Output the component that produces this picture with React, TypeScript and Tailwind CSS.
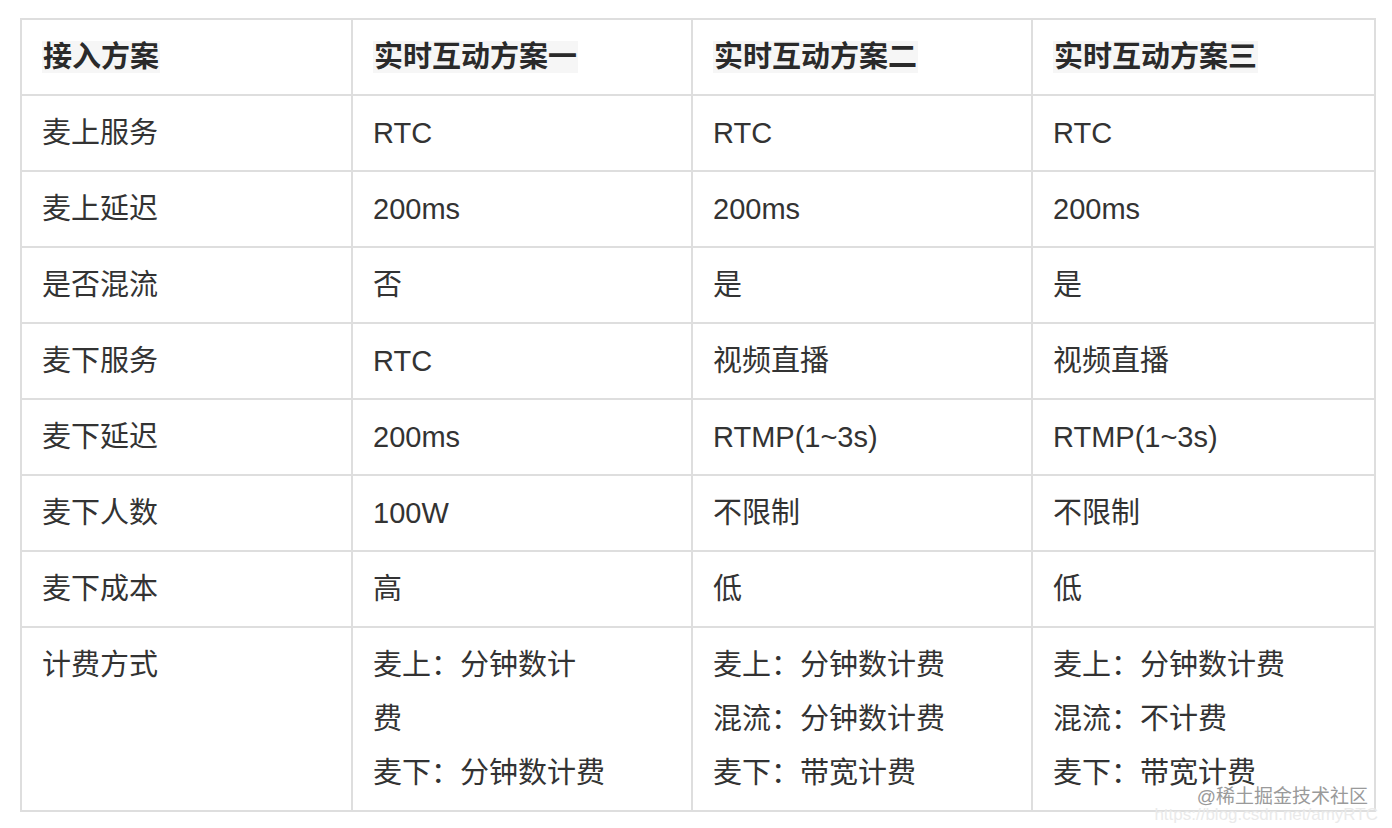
import React from "react";

const font = { fontFamily: '"Liberation Sans", "Noto Sans CJK SC", sans-serif' };

const header = ["接入方案", "实时互动方案一", "实时互动方案二", "实时互动方案三"];

const rows: string[][] = [
  ["麦上服务", "RTC", "RTC", "RTC"],
  ["麦上延迟", "200ms", "200ms", "200ms"],
  ["是否混流", "否", "是", "是"],
  ["麦下服务", "RTC", "视频直播", "视频直播"],
  ["麦下延迟", "200ms", "RTMP(1~3s)", "RTMP(1~3s)"],
  ["麦下人数", "100W", "不限制", "不限制"],
  ["麦下成本", "高", "低", "低"],
];

const billing: string[][] = [
  ["计费方式"],
  ["麦上：分钟数计", "费", "麦下：分钟数计费"],
  ["麦上：分钟数计费", "混流：分钟数计费", "麦下：带宽计费"],
  ["麦上：分钟数计费", "混流：不计费", "麦下：带宽计费"],
];

const cell = "border-2 border-[#dedede] px-[20px] py-[10px] align-top text-left";

export default function App() {
  return (
    <div className="relative w-[1392px] h-[828px] bg-white pt-[18px] pl-[20px]" style={font}>
      <table className="border-collapse table-fixed w-[1354px] text-[29px] leading-[54px] text-[#333]">
        <colgroup>
          <col className="w-[331px]" />
          <col className="w-[340px]" />
          <col className="w-[340px]" />
          <col className="w-[343px]" />
        </colgroup>
        <thead>
          <tr>
            {header.map((h) => (
              <th key={h} className={`${cell} font-bold text-[#2a2a2a]`}>
                <span className="bg-[#f6f6f6] px-[1px]">{h}</span>
              </th>
            ))}
          </tr>
        </thead>
        <tbody>
          {rows.map((r, i) => (
            <tr key={i}>
              {r.map((c, j) => (
                <td key={j} className={cell}>
                  {c}
                </td>
              ))}
            </tr>
          ))}
          <tr>
            {billing.map((lines, j) => (
              <td key={j} className={cell}>
                {lines.map((l, k) => (
                  <div key={k}>{l}</div>
                ))}
              </td>
            ))}
          </tr>
        </tbody>
      </table>
      <div className="absolute right-[24px] bottom-[20px] text-[19px] leading-[22px] text-[#9a9a9a]">
        @稀土掘金技术社区
      </div>
      <div className="absolute right-[14px] bottom-[4px] text-[17px] leading-[18px] text-[#eaeaea]">
        https://blog.csdn.net/amyRTC
      </div>
    </div>
  );
}
